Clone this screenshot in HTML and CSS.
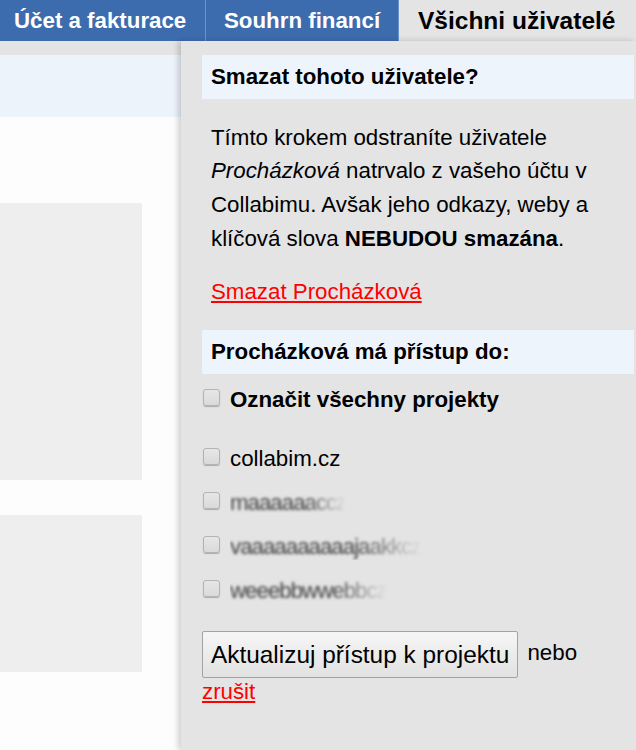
FILE: index.html
```html
<!DOCTYPE html>
<html lang="cs">
<head>
<meta charset="utf-8">
<title>Všichni uživatelé</title>
<link rel="stylesheet" href="styles.css">
</head>
<body>
<nav class="tabs">
  <a class="tab tab-1">Účet a fakturace</a>
  <a class="tab tab-2">Souhrn financí</a>
  <a class="tab tab-active">Všichni uživatelé</a>
</nav>
<div class="page">
  <div class="left">
    <div class="left-head"></div>
    <div class="left-body">
      <div class="card card-a"></div>
      <div class="card card-b"></div>
    </div>
  </div>
  <aside class="panel">
    <h2 class="panel-head">Smazat tohoto uživatele?</h2>
    <p class="panel-text">Tímto krokem odstraníte uživatele <em>Procházková</em> natrvalo z vašeho účtu v Collabimu. Avšak jeho odkazy, weby a klíčová slova <strong>NEBUDOU smazána</strong>.</p>
    <p class="panel-text link-line"><a class="red-link" href="#">Smazat Procházková</a></p>
    <h2 class="panel-head">Procházková má přístup do:</h2>
    <label class="check check-all"><input type="checkbox"><span>Označit všechny projekty</span></label>
    <ul class="projects">
      <li><label class="check"><input type="checkbox"><span>collabim.cz</span></label></li>
      <li><label class="check"><input type="checkbox"><span class="blur">maaaaaaccz</span></label></li>
      <li><label class="check"><input type="checkbox"><span class="blur">vaaaaaaaaaajaakkcz</span></label></li>
      <li><label class="check"><input type="checkbox"><span class="blur">weeebbwwebbcz</span></label></li>
    </ul>
    <div class="actions">
      <button class="btn" type="button">Aktualizuj přístup k projektu</button> nebo
      <a class="red-link" href="#">zrušit</a>
    </div>
  </aside>
</div>
</body>
</html>
```
FILE: styles.css
```css
* { box-sizing: border-box; }
html, body { margin: 0; padding: 0; }
body {
  width: 636px;
  height: 750px;
  overflow: hidden;
  background: #e4e4e4;
  font-family: "Liberation Sans", Arial, sans-serif;
  color: #000;
}
.tabs {
  display: flex;
  height: 41px;
  background: #3d6cae;
}
.tab {
  display: flex;
  align-items: center;
  font-size: 22.3px;
  font-weight: bold;
  color: #fff;
  text-decoration: none;
  white-space: nowrap;
  border-right: 1px solid #6b93cc;
}
.tab-1 { width: 206px; padding-left: 14px; }
.tab-2 { width: 193px; padding-left: 18px; }
.tab-active {
  flex: 1;
  background: #e4e4e4;
  color: #000;
  padding-left: 19px;
  border-right: none;
  font-size: 24.5px;
}
.page {
  display: flex;
  height: 709px;
}
.left {
  width: 181px;
  padding-top: 14px;
  display: flex;
  flex-direction: column;
}
.left-head {
  height: 62px;
  background: #edf3fb;
}
.left-body {
  flex: 1;
  background: #fdfdfd;
  padding-top: 86px;
}
.card { width: 142px; background: #eeeeee; }
.card-a { height: 277px; }
.card-b { height: 157px; margin-top: 35px; }
.panel {
  flex: 1;
  position: relative;
  background: #e4e4e4;
  box-shadow: -3px 0 6px rgba(0, 0, 0, 0.18);
  padding: 14px 2px 0 21px;
}
.panel-head {
  margin: 0;
  height: 44px;
  display: flex;
  align-items: center;
  padding-left: 9px;
  background: #eef4fc;
  font-size: 22.3px;
  font-weight: bold;
}
.panel-text {
  margin: 21.5px 0 0;
  padding: 0 20px 0 9px;
  font-size: 22.3px;
  line-height: 33.7px;
}
.link-line { margin: 20px 0 21px; }
.red-link { color: #f00; }
.check {
  display: flex;
  align-items: flex-start;
  gap: 10px;
  font-size: 22.3px;
}
.check input {
  appearance: none;
  -webkit-appearance: none;
  margin: 1px 0 0 1px;
  width: 17px;
  height: 17px;
  border: 1px solid #b4b4b4;
  border-radius: 3px;
  background: linear-gradient(#e6e6e6, #dadada);
  box-shadow: 0 1px 1px rgba(0,0,0,0.25);
  flex: none;
}
.check span { line-height: 26px; margin-top: -1px; }
.check-all {
  margin-top: 14px;
  font-weight: bold;
}
.projects {
  list-style: none;
  margin: 34px 0 0;
  padding: 0;
  display: flex;
  flex-direction: column;
  gap: 19px;
}
.blur {
  color: #404040;
  filter: blur(1.4px);
  letter-spacing: -1px;
  -webkit-mask-image: linear-gradient(90deg, #000 65%, transparent);
  mask-image: linear-gradient(90deg, #000 65%, transparent);
}
.actions {
  margin-top: 27px;
  font-size: 22.3px;
  line-height: 28px;
}
.btn {
  font-family: "Liberation Sans", Arial, sans-serif;
  font-size: 24.4px;
  height: 47px;
  padding: 0 8px;
  margin: 0 3px 0 0;
  border: 1px solid #a3a3a3;
  border-radius: 2px;
  background: linear-gradient(#f6f6f6, #e2e2e2);
  color: #000;
  vertical-align: middle;
}
.actions .red-link { display: block; margin-top: 0; }
```
